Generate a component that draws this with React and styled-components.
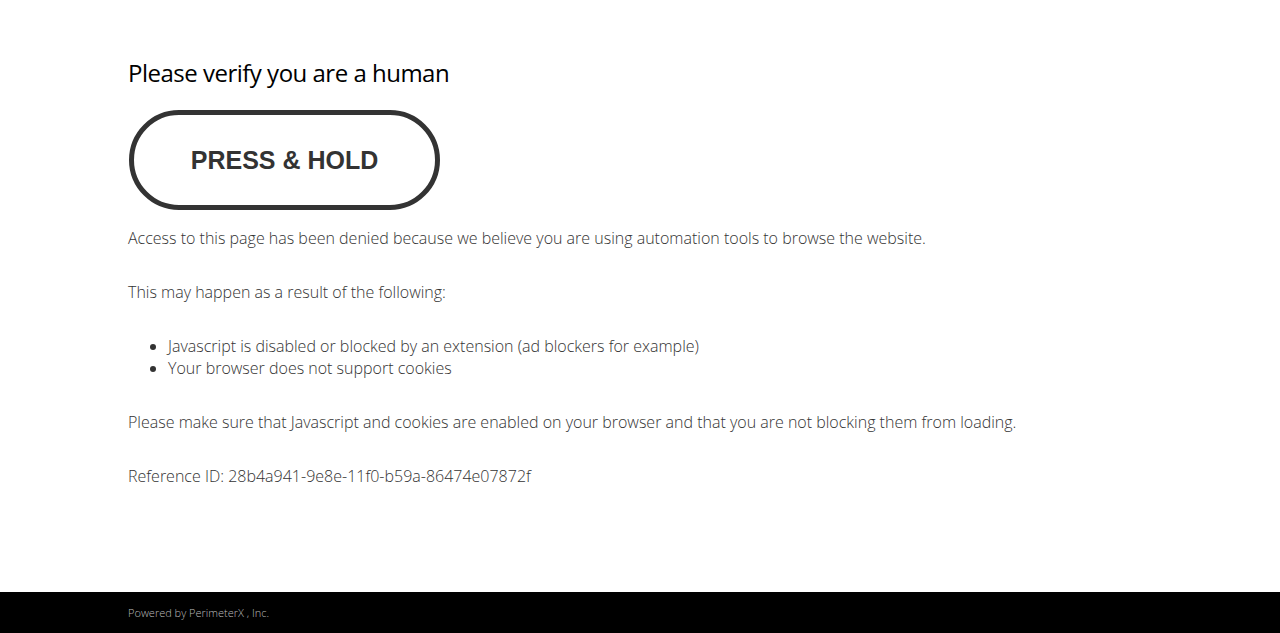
import React from 'react';
import styled, { createGlobalStyle } from 'styled-components';

const GlobalStyle = createGlobalStyle`
  html, body {
    margin: 0;
    padding: 0;
    background: #fff;
  }
  body {
    font-family: 'Open Sans', 'Liberation Sans', sans-serif;
    font-weight: 300;
  }
`;

const Page = styled.div`
  display: flex;
  flex-direction: column;
  min-height: 100vh;
`;

const Container = styled.main`
  flex: 1;
  width: 1024px;
  margin: 0 auto;
  padding-top: 56px;
`;

const Title = styled.h1`
  margin: 0 0 21px;
  font-size: 24px;
  font-weight: 400;
  line-height: 33px;
  letter-spacing: -0.5px;
  color: #000;
`;

const HoldButton = styled.div`
  display: flex;
  align-items: center;
  justify-content: center;
  box-sizing: border-box;
  width: 311px;
  height: 100px;
  margin-left: 1px;
  border: 5px solid #333;
  border-radius: 50px;
  font-family: 'Liberation Sans', Arial, sans-serif;
  font-weight: 700;
  font-size: 25px;
  color: #333;
  user-select: none;
  cursor: pointer;
`;

const Text = styled.p`
  margin: ${(p) => p.$top || 0}px 0 0;
  font-size: 16px;
  line-height: 22px;
  color: #333;
`;

const List = styled.ul`
  margin: 32px 0 0;
  padding-left: 40px;
  font-size: 16px;
  line-height: 22px;
  color: #333;
`;

const Footer = styled.footer`
  height: 41px;
  background: #000;
  display: flex;
  align-items: center;
`;

const FooterInner = styled.div`
  width: 1024px;
  margin: 0 auto;
  font-size: 11px;
  color: #bbb;
`;

export default function App() {
  return (
    <>
      <GlobalStyle />
      <Page>
        <Container>
          <Title>Please verify you are a human</Title>
          <HoldButton>PRESS &amp; HOLD</HoldButton>
          <Text $top={17}>
            Access to this page has been denied because we believe you are using automation tools to browse the website.
          </Text>
          <Text $top={32}>This may happen as a result of the following:</Text>
          <List>
            <li>Javascript is disabled or blocked by an extension (ad blockers for example)</li>
            <li>Your browser does not support cookies</li>
          </List>
          <Text $top={32}>
            Please make sure that Javascript and cookies are enabled on your browser and that you are not blocking them from loading.
          </Text>
          <Text $top={32}>Reference ID: 28b4a941-9e8e-11f0-b59a-86474e07872f</Text>
        </Container>
        <Footer>
          <FooterInner>Powered by PerimeterX , Inc.</FooterInner>
        </Footer>
      </Page>
    </>
  );
}
